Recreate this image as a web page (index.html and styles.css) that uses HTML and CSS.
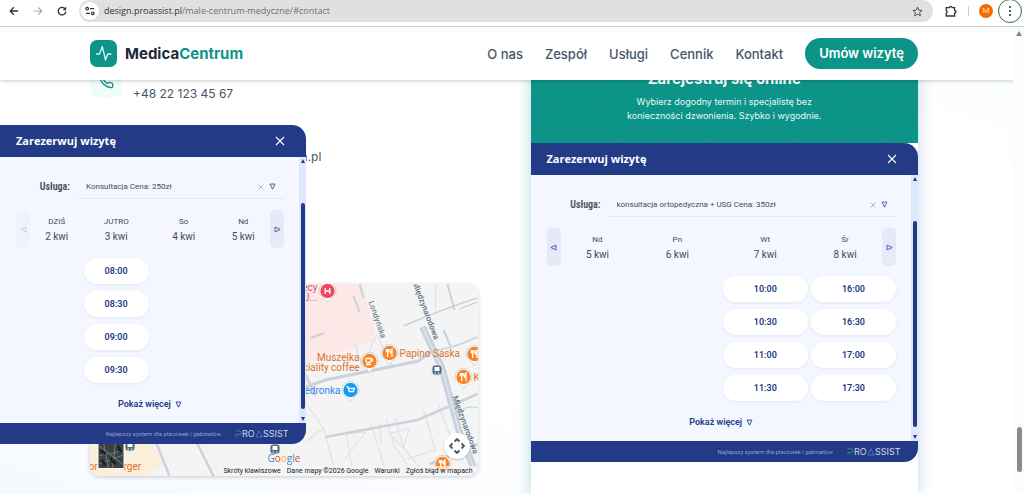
FILE: index.html
```html
<!DOCTYPE html>
<html lang="pl">
<head>
<meta charset="utf-8">
<title>MedicaCentrum – Kontakt</title>
<link rel="stylesheet" href="styles.css">
</head>
<body>
<svg class="defs" aria-hidden="true">
  <symbol id="cross" viewBox="0 0 10 10"><path d="M1 1l8 8M9 1L1 9" fill="none" stroke="currentColor" stroke-width="1.1"/></symbol>
  <symbol id="tri" viewBox="0 0 10 10"><path d="M1.5 1.5h7L5 8.8z" fill="none" stroke="currentColor" stroke-width="1.3"/></symbol>
  <symbol id="proassist" viewBox="0 0 56 10">
    <path d="M.5 1.900h4q1.600 0 1.600 1.800t-1.600 1.800H1v2.800" fill="none" stroke="#2f9468" stroke-width="1"/>
    <text x="7" y="8.300" class="brand-text">RO</text>
    <path d="M21 8l3-6.200L27 8z" fill="none" stroke="#6f86cc" stroke-width=".7"/>
    <text x="28" y="8.300" class="brand-text">SSIST</text>
  </symbol>
  <symbol id="pin" viewBox="0 0 20 22" overflow="visible">
    <path d="M1.500 9a8.500 8.500 0 1 1 17 0c0 5-5 6-8.500 11.500C6.500 15 1.500 14 1.500 9z" fill="#fff" stroke="#c4c7ca" stroke-width=".8"/>
    <circle cx="10" cy="9" r="7.200" fill="currentColor"/>
  </symbol>
</svg>

<div class="toolbar">
  <button class="tool" aria-label="Wstecz"><svg width="10" height="10" viewBox="0 0 10 10"><path d="M9.200 5H1.400M4.800 1.300L1.200 5l3.600 3.700" fill="none" stroke="#333" stroke-width="1.300"/></svg></button>
  <button class="tool" aria-label="Dalej"><svg width="10" height="10" viewBox="0 0 10 10"><path d="M.8 5h7.800M5.200 1.300L8.800 5 5.200 8.700" fill="none" stroke="#a8a8a8" stroke-width="1.200"/></svg></button>
  <button class="tool" aria-label="Odśwież"><svg width="10" height="10" viewBox="0 0 10 10"><path d="M8.300 3.200A3.800 3.800 0 1 0 8.800 5.600" fill="none" stroke="#333" stroke-width="1.300"/><path d="M9.200.6v3.600H5.600z" fill="#333"/></svg></button>
  <div class="address">
    <button class="site-info" aria-label="Informacje o witrynie"><svg width="10" height="10" viewBox="0 0 10 10"><g fill="none" stroke="#333" stroke-width="1.200"><circle cx="2.200" cy="2.700" r="1.300"/><path d="M5 2.700h4M1 7.300h4"/><circle cx="7.800" cy="7.300" r="1.300"/></g></svg></button>
    <span class="url">design.proassist.pl<span class="path">/male-centrum-medyczne/#contact</span></span>
    <button class="tool" aria-label="Dodaj zakładkę"><svg width="11" height="11" viewBox="0 0 24 24"><path d="M12 2.500l2.900 6.500 7.100.7-5.300 4.700 1.500 7-6.200-3.600-6.200 3.600 1.500-7L2 9.700l7.100-.7z" fill="none" stroke="#444" stroke-width="2"/></svg></button>
  </div>
  <button class="tool ext" aria-label="Rozszerzenia"><svg width="12" height="12" viewBox="0 0 12 12"><path d="M1.200 2.600h3.200a1.300 1.300 0 0 1 2.600 0h2.600v2.800a1.300 1.300 0 0 1 0 2.600v3H1.200V8.200a1.500 1.500 0 0 0 0-2.800z" fill="none" stroke="#333" stroke-width="1.300"/></svg></button>
  <span class="tool-divider"></span>
  <button class="avatar" aria-label="Profil">M</button>
  <button class="menu" aria-label="Menu"><svg width="4" height="12" viewBox="0 0 4 12"><g fill="#333"><circle cx="2" cy="2" r="1.100"/><circle cx="2" cy="6" r="1.100"/><circle cx="2" cy="10" r="1.100"/></g></svg></button>
</div>

<div class="viewport">
  <div class="page">
    <header class="site-header">
      <a class="logo" href="#home">
        <svg width="27" height="27" viewBox="0 0 27 27"><rect width="27" height="27" rx="7" fill="#0d9488"/><path d="M6.500 14h3l2.800-7.500 3.200 13.500 2.200-6H21" fill="none" stroke="#d9f5f0" stroke-width="1.300" stroke-linejoin="round" stroke-linecap="round"/></svg>
        <span>Medica<b>Centrum</b></span>
      </a>
      <nav class="nav">
        <a href="#about">O nas</a>
        <a href="#team">Zespół</a>
        <a href="#services">Usługi</a>
        <a href="#prices">Cennik</a>
        <a href="#contact">Kontakt</a>
        <a class="cta" href="#book">Umów wizytę</a>
      </nav>
    </header>

    <main class="contact">
      <section class="info">
        <div class="item">
          <span class="item-icon"><svg width="16" height="16" viewBox="0 0 24 24"><path d="M22 16.920v3a2 2 0 0 1-2.180 2 19.790 19.790 0 0 1-8.630-3.070 19.500 19.500 0 0 1-6-6 19.790 19.790 0 0 1-3.070-8.670A2 2 0 0 1 4.110 2h3a2 2 0 0 1 2 1.720c.13.960.36 1.900.7 2.810a2 2 0 0 1-.45 2.110L8.090 9.910a16 16 0 0 0 6 6l1.270-1.270a2 2 0 0 1 2.110-.45c.91.340 1.850.57 2.810.7A2 2 0 0 1 22 16.920z" fill="none" stroke="#0d9488" stroke-width="2"/></svg></span>
          <a href="tel:+48221234567">+48 22 123 45 67</a>
        </div>
        <div class="item">
          <span class="item-icon"></span>
          <a href="mailto:rejestracja.dr@medicacentrum.pl">rejestracja.dr@medicacentrum.pl</a>
        </div>
        <div class="map">
          <svg class="map-art" viewBox="0 0 388 192" preserveAspectRatio="xMaxYMin slice">
            <rect width="388" height="192" fill="#f4f4f5"/>
            <path d="M200 0h73l14 56-71 26z" fill="#fde8e8"/>
            <path d="M0 150h58l16 30-18 12H0z" fill="#fbeedb"/>
            <g fill="none" stroke="#dfe2e5" stroke-width="1.200">
              <path d="M287 50l17 34M266 60l8 28M287 54q-9 8-6 28M346 0v28M216 118l18 26-18 14M234 144l12 46M256 146l8 46M290 140l2 20M282 140l14 48M297 136l8 26 16 24M306 134l8 30 20 24M334 126l12 40-30 9M348 118l12 32 6 20M256 150l20-2-20 26M300 150l20-6-6 20z"/>
            </g>
            <g fill="none" stroke="#c9d3dd">
              <path d="M270 0l4 14M264 12l6 16M358 0l7 26M354 46l7 16M221 54l14-5" stroke-width="2"/>
              <path d="M314 42q42-18 74-28" stroke-width="1.500"/><path d="M341 67q22-2 47-14" stroke-width="1.500"/>
              <path d="M216 103l20-7 93-19 12-9" stroke-width="3"/><path d="M236 153l92-17 60-26" stroke-width="2.500"/>
              <path d="M333 43l19 40 17 62 15 38" stroke-width="7"/><path d="M333 43l19 40 17 62 15 38" stroke="#e9edf1" stroke-width="1"/>
              <path d="M64 152l16 40M104 152l20 40M216 90l10 22M340 180l48-20" stroke-width="2.500"/>
            </g>
            <path d="M370 25l18-7M370 127q9-6 18-3" fill="none" stroke="#a9dfc4" stroke-width="1.200"/>
            <g class="street">
              <text transform="translate(279 18) rotate(71)" class="minor">Londyńska</text>
              <text transform="translate(323 -1) rotate(69)">Międzynarodowa</text>
              <text transform="translate(363 113) rotate(70)">Międzynarodowa</text>
            </g>
            <g class="poi">
              <text x="228" y="7" text-anchor="end" fill="#dc5462">Szpital Dziecięcy</text>
              <text x="228" y="17" text-anchor="end" fill="#dc5462">J...</text>
              <text x="270" y="77" text-anchor="end">Muszelka</text>
              <text x="270" y="87" text-anchor="end">Speciality coffee</text>
              <text x="310" y="73">Papino Saska</text>
              <text x="384" y="97">K</text>
              <text x="251" y="110" text-anchor="end" fill="#3684ea">Biedronka</text>
              <text x="-1" y="186">or</text><text x="34" y="186">rger</text>
            </g>
            <use href="#pin" x="228" y="-2" width="20" height="22" color="#f04860"/>
            <use href="#pin" x="270" y="68" width="20" height="22" color="#fb8323"/>
            <use href="#pin" x="290" y="60" width="20" height="22" color="#fb8323"/>
            <use href="#pin" x="375" y="61" width="20" height="22" color="#fb8323"/>
            <use href="#pin" x="364" y="84" width="20" height="22" color="#fb8323"/>
            <use href="#pin" x="251" y="97" width="20" height="22" color="#159af4"/>
            <use href="#pin" x="343" y="171" width="20" height="22" color="#fb8323"/>
            <g fill="none" stroke="#fff" stroke-width="1.300">
              <path d="M235.700 4v6M240.300 4v6M235.700 7h4.600"/>
              <path d="M276.500 74.500h5V77q0 1.500-1.500 1.500h-2q-1.500 0-1.500-1.500zM281.500 75.200h1.500v1.600h-1.500M276.500 80.500h5"/>
              <path id="fork" d="M298.200 65v8M296.800 65v2.500h2.800V65M302.500 73v-8q-1.500 1-1.500 4h1.500"/>
              <use href="#fork" x="85" y="1"/><use href="#fork" x="74" y="24"/><use href="#fork" x="53" y="111"/>
              <path d="M257 103h1.500l1.300 4.500h4l1.200-3.200h-5.800M260.300 109.500h.1M263.500 109.500h.1"/>
            </g>
            <g id="stop"><rect x="342.500" y="81" width="10" height="10" rx="3" fill="#536b7b" stroke="#dce3e8"/><rect x="345" y="83" width="5" height="4" fill="#fff"/><path d="M345 89h1.500M348.500 89h1.500" stroke="#fff"/></g>
            <use href="#stop" x="-162" y="79"/><use href="#stop" x="-307" y="76"/>
            <text class="google" x="178" y="178"><tspan fill="#4285f4">G</tspan><tspan fill="#ea4335">o</tspan><tspan fill="#fbbc05">o</tspan><tspan fill="#4285f4">g</tspan><tspan fill="#34a853">l</tspan><tspan fill="#ea4335">e</tspan></text>
            <rect x="8" y="158" width="27" height="27" rx="2" fill="#fff"/><rect x="9" y="159" width="25" height="25" fill="#3b4245"/>
            <path d="M9 162l12 8 13-4M9 172l10-3 15 12M14 159l5 25M26 159l-3 25M9 180l25-9" fill="none" stroke="#737b7b"/><path d="M11 166l5 4M21 174l5 6M28 162l4 6M12 176l4 5" stroke="#1d2427" stroke-width="3"/>
          </svg>
          <button class="map-move" aria-label="Sterowanie mapą"><svg width="16" height="16" viewBox="0 0 16 16"><path d="M5.500 3.500L8 1l2.500 2.500M5.500 12.500L8 15l2.500-2.500M3.500 5.500L1 8l2.500 2.500M12.500 5.500L15 8l-2.500 2.500" fill="none" stroke="#555" stroke-width="1.800"/></svg></button>
          <div class="map-legal"><a href="#keys">Skróty klawiszowe</a><span>Dane mapy ©2026 Google</span><a href="#terms">Warunki</a><a href="#report">Zgłoś błąd w mapach</a></div>
        </div>
      </section>

      <section class="card">
        <div class="banner">
          <svg class="pattern" aria-hidden="true"><defs><pattern id="hex" width="44" height="50" patternUnits="userSpaceOnUse"><path d="M0 12L22 0l22 12M0 12v26l22 12 22-12M22 0v24M22 24L0 38M22 24l22 14" fill="none" stroke="#1b9e92" stroke-width="1"/></pattern></defs><rect width="100%" height="100%" fill="url(#hex)"/></svg>
          <h2>Zarejestruj się online</h2>
          <p>Wybierz dogodny termin i specjalistę bez<br>konieczności dzwonienia. Szybko i wygodnie.</p>
        </div>
        <div class="widget">
          <div class="w-head"><h3>Zarezerwuj wizytę</h3><button aria-label="Zamknij"><svg width="10" height="10"><use href="#cross"/></svg></button></div>
          <div class="w-body">
            <div class="w-content">
              <div class="service"><label for="s2">Usługa:</label><div class="field"><input id="s2" value="konsultacja ortopedyczna + USG Cena: 350zł"><button class="clear" aria-label="Wyczyść"><svg width="6" height="6"><use href="#cross"/></svg></button><button aria-label="Rozwiń"><svg width="7" height="7"><use href="#tri"/></svg></button></div></div>
              <div class="days"><button class="arrow" aria-label="Poprzednie dni"><svg class="left" width="7" height="7"><use href="#tri"/></svg></button>
                <div class="pairs"><div class="pair"><div><small>Nd</small>5 kwi</div><div><small>Pn</small>6 kwi</div></div><div class="pair"><div><small>Wt</small>7 kwi</div><div><small>Śr</small>8 kwi</div></div></div>
                <button class="arrow" aria-label="Następne dni"><svg class="right" width="7" height="7"><use href="#tri"/></svg></button></div>
              <div class="slots">
                <div class="col"></div><div class="col"></div>
                <div class="col"><button>10:00</button><button>10:30</button><button>11:00</button><button>11:30</button></div>
                <div class="col"><button>16:00</button><button>16:30</button><button>17:00</button><button>17:30</button></div>
              </div>
              <button class="more">Pokaż więcej <svg width="7" height="7"><use href="#tri"/></svg></button>
            </div>
            <div class="w-scroll"><i class="up"></i><i class="thumb"></i><i class="down"></i></div>
          </div>
          <div class="w-foot"><span>Najlepszy system dla placówek i gabinetów</span><svg width="56" height="10" role="img" aria-label="ProAssist"><use href="#proassist"/></svg></div>
        </div>
      </section>
    </main>

    <div class="widget floating">
      <div class="w-head"><h3>Zarezerwuj wizytę</h3><button aria-label="Zamknij"><svg width="10" height="10"><use href="#cross"/></svg></button></div>
      <div class="w-body">
        <div class="w-content">
          <div class="service"><label for="s1">Usługa:</label><div class="field"><input id="s1" value="Konsultacja Cena: 250zł"><button class="clear" aria-label="Wyczyść"><svg width="6" height="6"><use href="#cross"/></svg></button><button aria-label="Rozwiń"><svg width="7" height="7"><use href="#tri"/></svg></button></div></div>
          <div class="days"><button class="arrow" disabled aria-label="Poprzednie dni"><svg class="left" width="7" height="7"><use href="#tri"/></svg></button>
            <div class="pairs"><div class="pair"><div><small>DZIŚ</small>2 kwi</div><div><small>JUTRO</small>3 kwi</div></div><div class="pair"><div><small>So</small>4 kwi</div><div><small>Nd</small>5 kwi</div></div></div>
            <button class="arrow" aria-label="Następne dni"><svg class="right" width="7" height="7"><use href="#tri"/></svg></button></div>
          <div class="slots">
            <div class="col"></div>
            <div class="col"><button>08:00</button><button>08:30</button><button>09:00</button><button>09:30</button></div>
            <div class="col"></div><div class="col"></div>
          </div>
          <button class="more">Pokaż więcej <svg width="7" height="7"><use href="#tri"/></svg></button>
        </div>
        <div class="w-scroll"><i class="up"></i><i class="thumb"></i><i class="down"></i></div>
      </div>
      <div class="w-foot"><span>Najlepszy system dla placówek i gabinetów</span><svg width="56" height="10" role="img" aria-label="ProAssist"><use href="#proassist"/></svg></div>
    </div>
  </div>
  <div class="scrollbar"><i class="up"></i><i class="thumb"></i></div>
</div>
</body>
</html>
```
FILE: styles.css
```css
* { box-sizing: border-box; }
body { margin: 0; height: 100vh; display: flex; flex-direction: column; overflow: hidden; font-family: Inter, sans-serif; color: #475569; background: #fff; }
button { border: 0; padding: 0; background: none; font: inherit; color: inherit; display: flex; align-items: center; justify-content: center; }
a { color: inherit; text-decoration: none; }
h2, h3, p { margin: 0; }
svg { display: block; flex: none; }
.defs { position: absolute; width: 0; height: 0; }
i { display: block; }

/* Browser bar */
.toolbar { flex: none; display: flex; align-items: center; height: 27px; padding: 0 2px 4px 8px; border-bottom: 1px solid #d0d0d0; }
.tool { width: 12px; flex: none; }
.toolbar > .tool + .tool { margin-left: 12px; }
.address { flex: 1; display: flex; align-items: center; height: 22px; margin-left: 11px; padding: 0 10px 0 2px; background: #e0e0e0; border-radius: 11px; }
.site-info { width: 18px; height: 18px; border-radius: 50%; background: #fff; }
.url { flex: 1; margin-left: 5px; font: 9px/16px "Open Sans", sans-serif; color: #333; }
.path { color: #707070; }
.toolbar > .ext { margin: 0 0 0 12px; }
.tool-divider { width: 1px; height: 10px; margin: 0 10px 0 11px; background: #b9deb0; }
.avatar { width: 14px; height: 14px; border-radius: 50%; background: #f56a00; color: #ffe3cc; font: 8px/14px Roboto, sans-serif; }
.menu { width: 24px; height: 24px; margin-left: 5px; border: 1px solid #2f7038; border-radius: 50%; }

/* Page frame */
.viewport { flex: 1; display: flex; min-height: 0; }
.page { flex: 1; position: relative; display: flex; flex-direction: column; overflow: hidden; background: linear-gradient(20deg, #f5f9ff 0, #fff 35%, #fff 80%, #fafefe 100%); }
.scrollbar { width: 10px; display: flex; flex-direction: column; align-items: center; padding: 4px 0; background: #fcfcfc; }
.up { border: 3px solid transparent; border-top: 0; border-bottom: 5px solid #858585; }
.down { border: 3px solid transparent; border-bottom: 0; border-top: 5px solid #858585; }
.scrollbar .thumb { width: 5px; height: 45px; margin: auto 0 18px; border-radius: 3px; background: #8b8b8b; }

.site-header { position: absolute; inset: 0 0 auto; z-index: 2; display: flex; align-items: center; justify-content: space-between; height: 53px; padding: 0 96px 0 90px; background: #fff; box-shadow: 0 1px 4px rgba(0, 0, 0, .2); }
.logo { display: flex; align-items: center; gap: 8px; font-size: 15px; font-weight: 700; color: #1e293b; }
.logo b { font-weight: 700; color: #0d9488; }
.nav { display: flex; align-items: center; gap: 22px; font-size: 13px; font-weight: 500; }
.cta { padding: 0 14px; border-radius: 16px; background: #0d9488; color: #fff; font-weight: 600; line-height: 31px; }

.contact { flex: 1; min-height: 0; display: grid; grid-template-columns: 1fr 1fr; gap: 53px; padding: 26px 96px 0 90px; }
.info { padding-top: 12px; min-width: 0; }
.item { display: flex; gap: 11px; height: 37px; margin-bottom: 26px; font-size: 12px; line-height: 16px; }
.item a { align-self: flex-end; }
.item-icon { width: 32px; height: 32px; display: grid; place-items: center; border-radius: 8px; background: #effcfa; }

/* Map */
.map { position: relative; height: 192px; margin-top: 119px; border-radius: 10px; overflow: hidden; box-shadow: 0 1px 4px rgba(0, 0, 0, .2); }
.map-art { width: 100%; height: 100%; }
.poi { font: 400 10px Roboto, sans-serif; fill: #dc732b; }
.street { font: 500 8px Roboto, sans-serif; fill: #63717e; }
.minor { font-size: 8px; fill: #7d858c; }
.google { font: 500 10px "Open Sans", sans-serif; }
.map-move { position: absolute; right: 8px; bottom: 17px; width: 26px; height: 26px; border-radius: 50%; background: #fff; box-shadow: 0 1px 2px rgba(0, 0, 0, .2); }
.map-legal { position: absolute; right: 0; bottom: 0; display: flex; gap: 6px; padding: 0 5px 0 2px; background: rgba(245, 245, 245, .7); font: 7px/10px Roboto, sans-serif; color: #222; white-space: nowrap; }

/* Booking card */
.card { min-width: 0; background: #fff; box-shadow: -4px 0 10px rgba(13, 148, 136, .16), 4px 0 12px rgba(60, 120, 190, .16); }
.banner { position: relative; padding: 16px 16px 20px; background: #0d9488; color: #e6f7f5; text-align: center; }
.pattern { position: absolute; inset: 0; width: 100%; height: 100%; opacity: .25; }
.banner h2, .banner p { position: relative; }
.banner h2 { font-size: 15px; line-height: 20px; color: #fff; }
.banner p { margin-top: 6px; font-size: 9px; line-height: 14px; }

.widget { color: #444b59; font-family: Roboto, sans-serif; border-radius: 0 14px 14px 0; }
.floating { position: absolute; left: 0; top: 98px; width: 306px; z-index: 1; }
.w-head { display: flex; align-items: center; justify-content: space-between; height: 32px; padding: 0 21px 0 16px; border-radius: 0 14px 0 0; background: #233a87; color: #fff; }
.w-head h3 { font: 700 11px/16px "Open Sans", sans-serif; }
.w-body { display: flex; height: 266px; background: #f4f7ff; }
.w-content { flex: 1; min-width: 0; padding: 18px 15px 0 16px; }
.service { display: flex; align-items: center; height: 24px; }
.service label { width: 62px; padding-right: 8px; text-align: right; font: 600 10px/12px "Roboto Condensed", "Liberation Sans Narrow", Roboto, sans-serif; }
.field { flex: 1; display: flex; align-items: center; gap: 5px; height: 24px; padding: 0 8px; border-bottom: 1px solid #e4e9f7; color: #4055a0; }
.field input { flex: 1; min-width: 0; padding: 0; border: 0; background: none; font: 8px/12px Roboto, sans-serif; color: #444b59; }
.clear { color: #8a9acb; }
.days { display: flex; margin-top: 11px; height: 38px; }
.arrow { width: 14px; flex: none; border-radius: 5px; background: #e6e9f8; color: #4055a0; }
.arrow:disabled { background: #f0f3fd; color: #c3cbe6; }
.left { transform: rotate(90deg); }
.right { transform: rotate(-90deg); }
.pairs { flex: 1; display: flex; gap: 8px; margin: 0 -3px; }
.pair { flex: 1; display: flex; }
.pair div { flex: 1; text-align: center; font-size: 10px; line-height: 16px; padding-top: 5px; }
.pair small { display: block; font-size: 8px; line-height: 14px; }
.slots { display: grid; grid-template-columns: repeat(4, 1fr); gap: 3px; margin-top: 10px; }
.col { display: grid; gap: 7px; }
.col button { height: 26px; border-radius: 13px; background: #fff; box-shadow: 0 1px 3px rgba(80, 110, 190, .1); color: #233a87; font-size: 9px; font-weight: 600; }
.more { gap: 4px; margin: 14px auto 0; color: #233a87; font-size: 9px; font-weight: 600; line-height: 14px; }
.w-scroll { width: 7px; display: flex; flex-direction: column; align-items: center; padding: 2px 0; background: #dfe7fd; }
.w-scroll .up { border-width: 0 2px 4px; border-bottom-color: #233a87; }
.w-scroll .down { border-width: 4px 2px 0; border-top-color: #233a87; }
.w-scroll .thumb { flex: 1; width: 4px; margin: 40px 0 8px; border-radius: 2px; background: #233a87; }
.w-foot { display: flex; align-items: center; justify-content: flex-end; gap: 14px; height: 21px; padding-right: 15px; border-radius: 0 0 14px 0; background: #233a87; font-size: 6px; color: #8f9fd0; }
.brand-text { font: 9px Inter, sans-serif; fill: #cdd6ee; }
```
